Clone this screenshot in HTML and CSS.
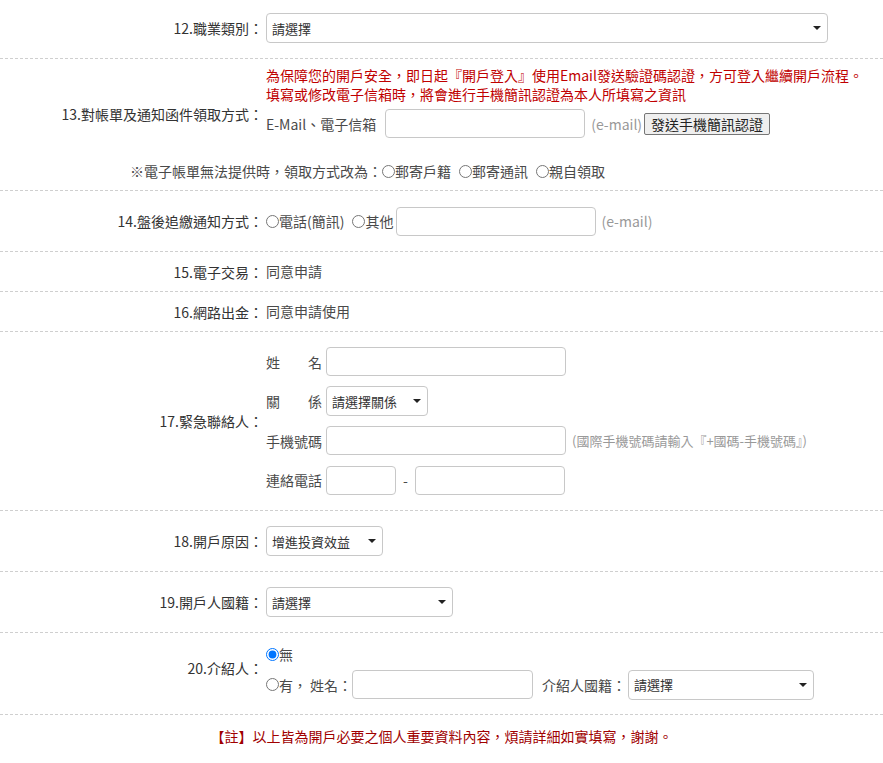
FILE: index.html
```html
<!DOCTYPE html>
<html lang="zh-Hant">
<head>
<meta charset="utf-8">
<title>開戶資料</title>
<link rel="stylesheet" href="styles.css">
</head>
<body>
<div class="form">

  <div class="row row-first">
    <div class="label">12.職業類別：</div>
    <div class="field">
      <div class="line">
        <span class="sel w562"><select><option>請選擇</option></select></span>
      </div>
    </div>
  </div>

  <div class="row row-13">
    <div class="label label-13">13.對帳單及通知函件領取方式：</div>
    <div class="field">
      <div class="warn">為保障您的開戶安全，即日起『開戶登入』使用Email發送驗證碼認證，方可登入繼續開戶流程。</div>
      <div class="warn">填寫或修改電子信箱時，將會進行手機簡訊認證為本人所填寫之資訊</div>
      <div class="line line-email">
        <span class="txt">E-Mail、電子信箱</span>
        <input class="inp w200 ml9" type="text">
        <span class="hint ml6">(e-mail)</span>
        <button class="btn" type="button">發送手機簡訊認證</button>
      </div>
    </div>
    <div class="note">
      <span class="txt">※電子帳單無法提供時，領取方式改為：</span>
      <label class="opt"><input type="radio" name="alt">郵寄戶籍</label>
      <label class="opt"><input type="radio" name="alt">郵寄通訊</label>
      <label class="opt"><input type="radio" name="alt">親自領取</label>
    </div>
  </div>

  <div class="row">
    <div class="label">14.盤後追繳通知方式：</div>
    <div class="field">
      <div class="line">
        <label class="opt"><input type="radio" name="notify">電話(簡訊)</label>
        <label class="opt opt-tight"><input type="radio" name="notify">其他</label>
        <input class="inp w200" type="text">
        <span class="hint ml5">(e-mail)</span>
      </div>
    </div>
  </div>

  <div class="row row-text">
    <div class="label">15.電子交易：</div>
    <div class="field"><span class="txt">同意申請</span></div>
  </div>

  <div class="row row-text">
    <div class="label">16.網路出金：</div>
    <div class="field"><span class="txt">同意申請使用</span></div>
  </div>

  <div class="row">
    <div class="label">17.緊急聯絡人：</div>
    <div class="field">
      <div class="line line-contact">
        <span class="sub">姓　　名</span>
        <input class="inp w240" type="text">
      </div>
      <div class="line line-contact">
        <span class="sub">關　　係</span>
        <span class="sel w102"><select><option>請選擇關係</option></select></span>
      </div>
      <div class="line line-contact">
        <span class="sub">手機號碼</span>
        <input class="inp w240" type="text">
        <span class="hint hint-sm ml6">(國際手機號碼請輸入『+國碼-手機號碼』)</span>
      </div>
      <div class="line line-contact">
        <span class="sub">連絡電話</span>
        <input class="inp w70" type="text">
        <span class="dash">-</span>
        <input class="inp w150" type="text">
      </div>
    </div>
  </div>

  <div class="row">
    <div class="label">18.開戶原因：</div>
    <div class="field">
      <div class="line">
        <span class="sel w117"><select><option>增進投資效益</option></select></span>
      </div>
    </div>
  </div>

  <div class="row">
    <div class="label">19.開戶人國籍：</div>
    <div class="field">
      <div class="line">
        <span class="sel w187"><select><option>請選擇</option></select></span>
      </div>
    </div>
  </div>

  <div class="row">
    <div class="label label-20">20.介紹人：</div>
    <div class="field">
      <div class="line line-first">
        <label class="opt"><input type="radio" name="ref" checked>無</label>
      </div>
      <div class="line line-ref">
        <label class="opt opt-tight"><input type="radio" name="ref">有，</label>
        <span class="txt">姓名：</span>
        <input class="inp w181" type="text">
        <span class="txt ref-nat">介紹人國籍：</span>
        <span class="sel w186"><select><option>請選擇</option></select></span>
      </div>
    </div>
  </div>

  <div class="footnote">【註】以上皆為開戶必要之個人重要資料內容，煩請詳細如實填寫，謝謝。</div>

</div>
</body>
</html>
```

FILE: styles.css
```css
html, body {
  margin: 0;
  padding: 0;
  background: #fff;
}

body {
  font-family: "Noto Sans CJK TC", "Noto Sans", sans-serif;
  font-size: 14px;
  color: #333;
}

.form {
  width: 883px;
}

.row {
  display: grid;
  grid-template-columns: 263px 1fr;
  column-gap: 3px;
  padding: 10px 0;
  border-bottom: 1px dashed #cfcfcf;
}

.row-first {
  padding-top: 8px;
}

.row-text {
  line-height: 19px;
}

.label {
  text-align: right;
  align-self: center;
  line-height: 18px;
  color: #333;
  white-space: nowrap;
}

.field {
  align-self: center;
  color: #4a4a4a;
}

.line {
  display: flex;
  align-items: center;
  height: 40px;
  white-space: nowrap;
}

/* row 13 */
.row-13 {
  grid-template-rows: auto auto;
  padding-top: 7px;
  padding-bottom: 10px;
}

.label-13 {
  grid-row: 1;
  grid-column: 1;
  align-self: end;
  padding-bottom: 20px;
}

.row-13 .field {
  grid-row: 1;
  grid-column: 2;
  align-self: start;
}

.warn {
  color: #c00000;
  line-height: 19px;
  white-space: nowrap;
}

.line-email {
  height: 39px;
}

.note {
  grid-row: 2;
  grid-column: 1 / -1;
  display: flex;
  align-items: center;
  padding-left: 130px;
  margin-top: 19px;
  line-height: 18px;
  color: #4a4a4a;
  white-space: nowrap;
}

.txt {
  color: #4a4a4a;
}

.hint {
  color: #999;
}

.hint-sm {
  font-size: 13px;
}

.btn {
  margin-left: 2px;
  height: 22px;
  padding: 0 6px;
  font-family: "Noto Sans CJK TC", "Noto Sans", sans-serif;
  font-size: 14px;
  line-height: 18px;
  color: #222;
  background: #efefef;
  border: 1px solid #767676;
  border-radius: 2px;
}

/* radios */
.opt {
  display: inline-flex;
  align-items: center;
  margin-right: 8px;
  color: #4a4a4a;
}

.opt-tight {
  margin-right: 3px;
}

.opt input {
  margin: 0;
  width: 13px;
  height: 13px;
}

/* inputs */
.inp {
  box-sizing: border-box;
  height: 29px;
  margin: 0;
  padding: 0 6px;
  border: 1px solid #c8c8c8;
  border-radius: 4px;
  font-family: "Noto Sans CJK TC", "Noto Sans", sans-serif;
  font-size: 13px;
  background: #fff;
}

.w70 { width: 70px; }
.w150 { width: 150px; }
.w181 { width: 181px; }
.w200 { width: 200px; }
.w240 { width: 240px; }

/* selects */
.sel {
  position: relative;
  display: inline-block;
  height: 30px;
}

.sel::after {
  content: "";
  position: absolute;
  right: 7px;
  top: 50%;
  margin-top: -2px;
  border-left: 4px solid transparent;
  border-right: 4px solid transparent;
  border-top: 4px solid #222;
  pointer-events: none;
}

.sel select {
  -webkit-appearance: none;
  appearance: none;
  box-sizing: border-box;
  width: 100%;
  height: 30px;
  margin: 0;
  padding: 0 20px 0 5px;
  border: 1px solid #c8c8c8;
  border-radius: 4px;
  background: #fff;
  font-family: "Noto Sans CJK TC", "Noto Sans", sans-serif;
  font-size: 13px;
  color: #333;
}

.w102 { width: 102px; }
.w117 { width: 117px; }
.w186 { width: 186px; }
.w187 { width: 187px; }
.w562 { width: 562px; }

/* row 17 */
.line-contact {
  height: 39.5px;
}

.sub {
  width: 56px;
  margin-right: 4px;
  color: #4a4a4a;
}

.dash {
  width: 19px;
  text-align: center;
  color: #4a4a4a;
}

/* row 20 */
.label-20 {
  padding-bottom: 12px;
}

.line-first {
  height: 22px;
}

.line-ref {
  height: 39px;
}

.ref-nat {
  margin-left: 9px;
  margin-right: 2px;
}

.footnote {
  padding-top: 12px;
  text-align: center;
  line-height: 18px;
  color: #a00000;
}

/* spacing helpers (after .inp so they win) */
.ml5 { margin-left: 5px; }
.ml6 { margin-left: 6px; }
.ml9 { margin-left: 9px; }
```
